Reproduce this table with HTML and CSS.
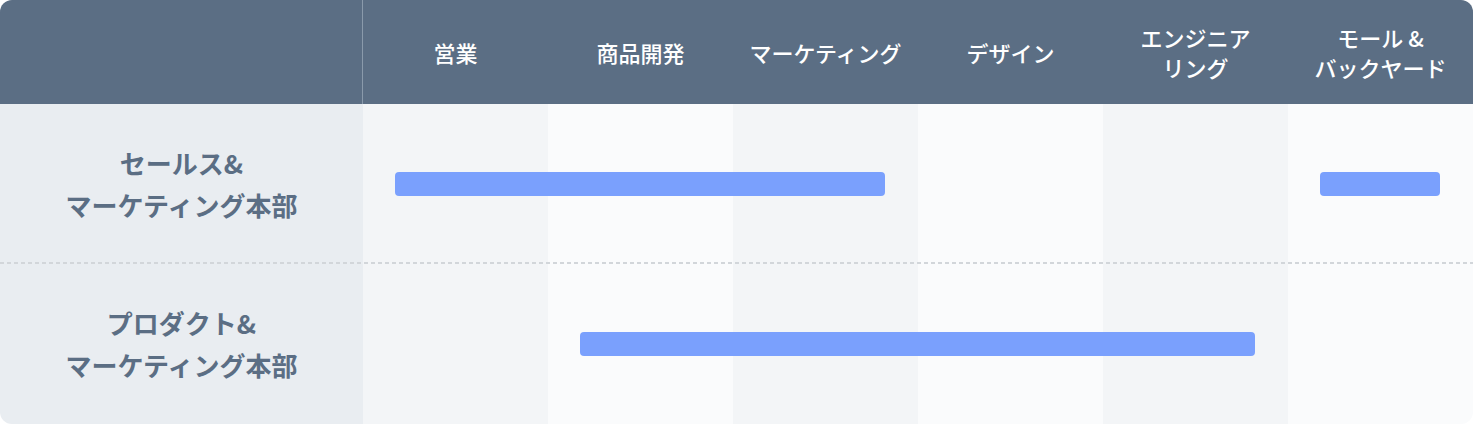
FILE: index.html
```html
<!DOCTYPE html>
<html lang="ja">
<head>
<meta charset="utf-8">
<link rel="stylesheet" href="styles.css">
</head>
<body>
<div class="table">
  <div class="hcell corner"></div>
  <div class="hcell">営業</div>
  <div class="hcell">商品開発</div>
  <div class="hcell">マーケティング</div>
  <div class="hcell">デザイン</div>
  <div class="hcell">エンジニア<br>リング</div>
  <div class="hcell">モール &amp;<br>バックヤード</div>

  <div class="label r1">セールス&amp;<br>マーケティング本部</div>
  <div class="cell odd r1 c1"></div>
  <div class="cell even r1 c2"></div>
  <div class="cell odd r1 c3"></div>
  <div class="cell even r1 c4"></div>
  <div class="cell odd r1 c5"></div>
  <div class="cell even r1 c6"></div>
  <div class="divider r1"></div>
  <div class="bar r1 span-1-3"></div>
  <div class="bar r1 span-6-6"></div>

  <div class="label r2">プロダクト&amp;<br>マーケティング本部</div>
  <div class="cell odd r2 c1"></div>
  <div class="cell even r2 c2"></div>
  <div class="cell odd r2 c3"></div>
  <div class="cell even r2 c4"></div>
  <div class="cell odd r2 c5"></div>
  <div class="cell even r2 c6"></div>
  <div class="bar r2 span-2-5"></div>
</div>
</body>
</html>
```
FILE: styles.css
```css
html, body {
  margin: 0;
  padding: 0;
  background: #ffffff;
}
body {
  font-family: "Noto Sans CJK JP", "Noto Sans", sans-serif;
}
.table {
  width: 1473px;
  display: grid;
  grid-template-columns: 363px repeat(6, 185px);
  grid-template-rows: 104px 160px 160px;
  border-radius: 12px;
  overflow: hidden;
}
.hcell {
  grid-row: 1;
  background: #5b6e84;
  color: #ffffff;
  font-size: 22px;
  font-weight: 500;
  line-height: 30px;
  display: flex;
  align-items: center;
  justify-content: center;
  text-align: center;
}
.hcell.corner {
  border-right: 1px solid #8a9aab;
  box-sizing: border-box;
}
.label {
  grid-column: 1;
  background: #e9edf1;
  color: #5b6e84;
  font-size: 26px;
  font-weight: 700;
  line-height: 42px;
  display: flex;
  align-items: center;
  justify-content: center;
  text-align: center;
}
.r1 { grid-row: 2; }
.r2 { grid-row: 3; }
.c1 { grid-column: 2; }
.c2 { grid-column: 3; }
.c3 { grid-column: 4; }
.c4 { grid-column: 5; }
.c5 { grid-column: 6; }
.c6 { grid-column: 7; }
.cell.odd { background: #f3f5f7; }
.cell.even { background: #fafbfc; }
.divider {
  grid-column: 1 / -1;
  align-self: end;
  height: 2px;
  background: repeating-linear-gradient(to right, #d2d6da 0 4px, transparent 4px 7px);
}
.bar {
  align-self: center;
  height: 24px;
  margin: 0 33px 0 32px;
  background: #7aa0fd;
  border-radius: 4px;
}
.span-1-3 { grid-column: 2 / 5; }
.span-2-5 { grid-column: 3 / 7; }
.span-6-6 { grid-column: 7 / 8; }
```
